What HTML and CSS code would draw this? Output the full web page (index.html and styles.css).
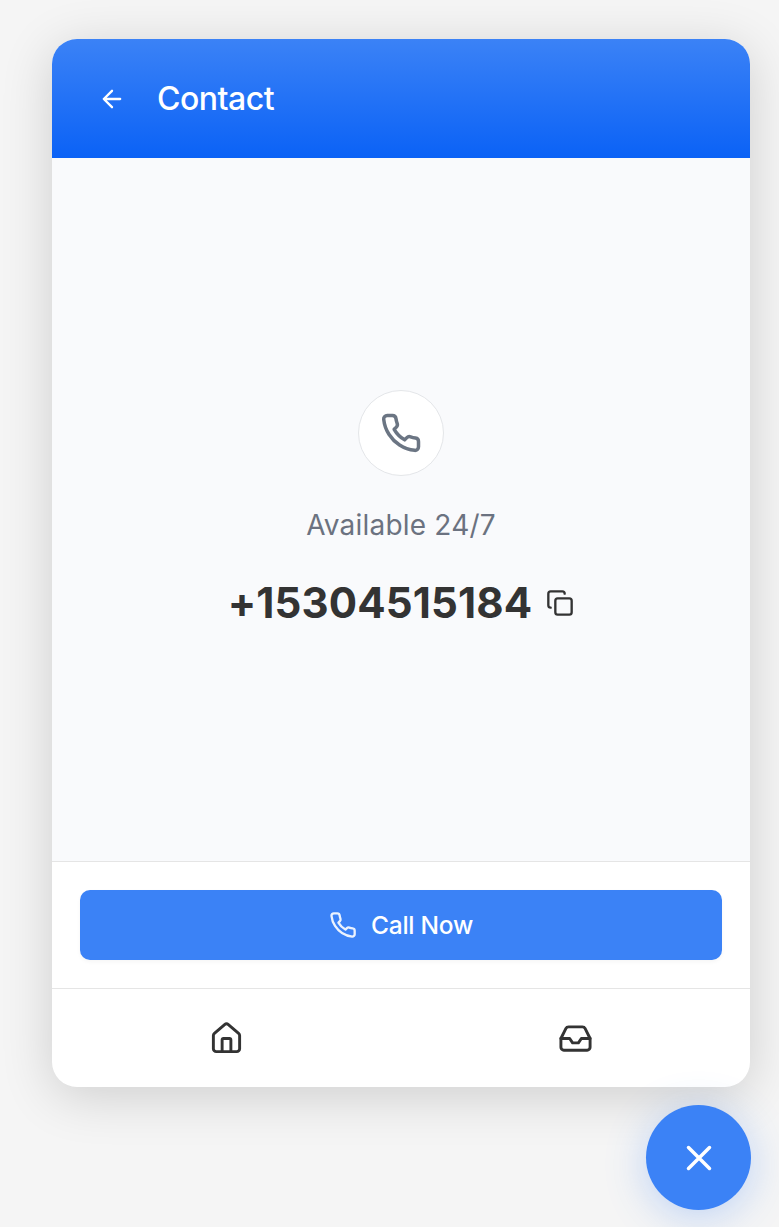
FILE: index.html
```
<!DOCTYPE html>
<html lang="en">
<head>
<meta charset="utf-8">
<title>Contact</title>
<link rel="stylesheet" href="styles.css">
</head>
<body>
<main class="widget">
  <header class="header">
    <svg class="icon back" viewBox="0 0 24 24"><path d="m12 19-7-7 7-7M19 12H5"/></svg>
    <h1 class="title">Contact</h1>
  </header>
  <section class="content">
    <div class="avatar">
      <svg class="icon avatar-icon" viewBox="0 0 24 24"><path d="M22 16.92v3a2 2 0 0 1-2.18 2 19.79 19.79 0 0 1-8.63-3.07 19.5 19.5 0 0 1-6-6 19.79 19.79 0 0 1-3.07-8.67A2 2 0 0 1 4.11 2h3a2 2 0 0 1 2 1.72 12.84 12.84 0 0 0 .7 2.81 2 2 0 0 1-.45 2.11L8.09 9.91a16 16 0 0 0 6 6l1.27-1.27a2 2 0 0 1 2.11-.45 12.84 12.84 0 0 0 2.81.7A2 2 0 0 1 22 16.92z"/></svg>
    </div>
    <p class="hours">Available 24/7</p>
    <div class="number-row">
      <span class="number">+15304515184</span>
      <svg class="icon copy" viewBox="0 0 24 24"><rect x="8" y="8" width="14" height="14" rx="2"/><path d="M4 16c-1.1 0-2-.9-2-2V4c0-1.1.9-2 2-2h10c1.1 0 2 .9 2 2"/></svg>
    </div>
  </section>
  <div class="action">
    <button class="call">
      <svg class="icon call-icon" viewBox="0 0 24 24"><path d="M22 16.92v3a2 2 0 0 1-2.18 2 19.79 19.79 0 0 1-8.63-3.07 19.5 19.5 0 0 1-6-6 19.79 19.79 0 0 1-3.07-8.67A2 2 0 0 1 4.11 2h3a2 2 0 0 1 2 1.72 12.84 12.84 0 0 0 .7 2.81 2 2 0 0 1-.45 2.11L8.09 9.91a16 16 0 0 0 6 6l1.27-1.27a2 2 0 0 1 2.11-.45 12.84 12.84 0 0 0 2.81.7A2 2 0 0 1 22 16.92z"/></svg>
      <span class="call-label">Call Now</span>
    </button>
  </div>
  <nav class="nav">
    <a class="nav-item"><svg class="icon nav-icon" viewBox="0 0 24 24"><path d="M15 21v-8a1 1 0 0 0-1-1h-4a1 1 0 0 0-1 1v8"/><path d="M3 10a2 2 0 0 1 .709-1.528l7-5.999a2 2 0 0 1 2.582 0l7 5.999A2 2 0 0 1 21 10v9a2 2 0 0 1-2 2H5a2 2 0 0 1-2-2z"/></svg></a>
    <a class="nav-item"><svg class="icon nav-icon" viewBox="0 0 24 24"><path d="M22 12h-6l-2 3h-4l-2-3H2"/><path d="M5.45 5.11 2 12v6a2 2 0 0 0 2 2h16a2 2 0 0 0 2-2v-6l-3.45-6.89A2 2 0 0 0 16.76 4H7.24a2 2 0 0 0-1.79 1.11z"/></svg></a>
  </nav>
</main>
<button class="launcher"><svg class="icon close" viewBox="0 0 24 24"><path d="M18 6 6 18M6 6l12 12"/></svg></button>
</body>
</html>
```
FILE: styles.css
```
* { box-sizing: border-box; }
html, body { height: 100%; }
body {
  margin: 0;
  padding: 39px 28px 0 52px;
  display: flex;
  flex-direction: column;
  background: #f5f5f5;
  font-family: Inter, "Liberation Sans", sans-serif;
  color: #333;
  overflow: hidden;
}
.icon {
  display: block;
  flex: none;
  fill: none;
  stroke: currentColor;
  stroke-width: 2;
  stroke-linecap: round;
  stroke-linejoin: round;
}
.widget {
  width: 698px;
  height: 1048px;
  flex: none;
  display: flex;
  flex-direction: column;
  background: #fff;
  border-radius: 25px;
  overflow: hidden;
  box-shadow: 0 9px 52px rgba(0, 0, 0, .16);
}
.header {
  height: 119px;
  flex: none;
  padding-left: 46px;
  display: flex;
  align-items: center;
  gap: 31px;
  color: #fff;
  background: linear-gradient(180deg, #3b82f6, #0b62f6);
}
.back { width: 28px; height: 28px; }
.title {
  margin: 0;
  padding-top: 1px;
  font-size: 32px;
  font-weight: 500;
  line-height: 44px;
  letter-spacing: -.5px;
}
.content {
  flex: 1;
  padding-top: 232px;
  display: flex;
  flex-direction: column;
  align-items: center;
  background: #f9fafc;
}
.avatar {
  width: 86px;
  height: 86px;
  display: grid;
  place-items: center;
  border: 1px solid #e4e6e9;
  border-radius: 50%;
  background: #fff;
  color: #6b7583;
}
.avatar-icon { width: 42px; height: 42px; }
.hours {
  margin: 29px 0 0;
  font-size: 28px;
  line-height: 40px;
  letter-spacing: .2px;
  color: #6b7280;
}
.number-row {
  margin-top: 27px;
  display: flex;
  align-items: center;
  gap: 14px;
}
.number {
  padding-top: 1px;
  font-size: 42px;
  line-height: 60px;
  font-weight: 700;
  letter-spacing: .15px;
}
.copy { width: 28px; height: 28px; }
.action {
  height: 127px;
  flex: none;
  padding: 28px;
  border-top: 1px solid #e5e5e5;
}
.call {
  width: 100%;
  height: 70px;
  padding: 0;
  border: 0;
  border-radius: 10px;
  display: flex;
  align-items: center;
  justify-content: center;
  gap: 14px;
  background: #3b82f6;
  color: #fff;
  font-family: inherit;
  font-size: 24.5px;
  font-weight: 500;
  letter-spacing: -.25px;
  box-shadow: 0 2px 4px rgba(0, 0, 0, .04);
}
.call-icon { width: 28px; height: 28px; opacity: .9; }
.nav {
  height: 99px;
  flex: none;
  display: grid;
  grid-template-columns: 1fr 1fr;
  border-top: 1px solid #e5e5e5;
}
.nav-item { display: grid; place-items: center; }
.nav-icon { width: 35px; height: 35px; }
.launcher {
  width: 105px;
  height: 105px;
  flex: none;
  align-self: flex-end;
  margin: 18px 0 0;
  padding: 0;
  border: 0;
  border-radius: 50%;
  display: grid;
  place-items: center;
  background: #3b82f6;
  color: #fff;
  box-shadow: 0 7px 42px rgba(59, 130, 246, .3);
}
.close { width: 42px; height: 42px; }
```
